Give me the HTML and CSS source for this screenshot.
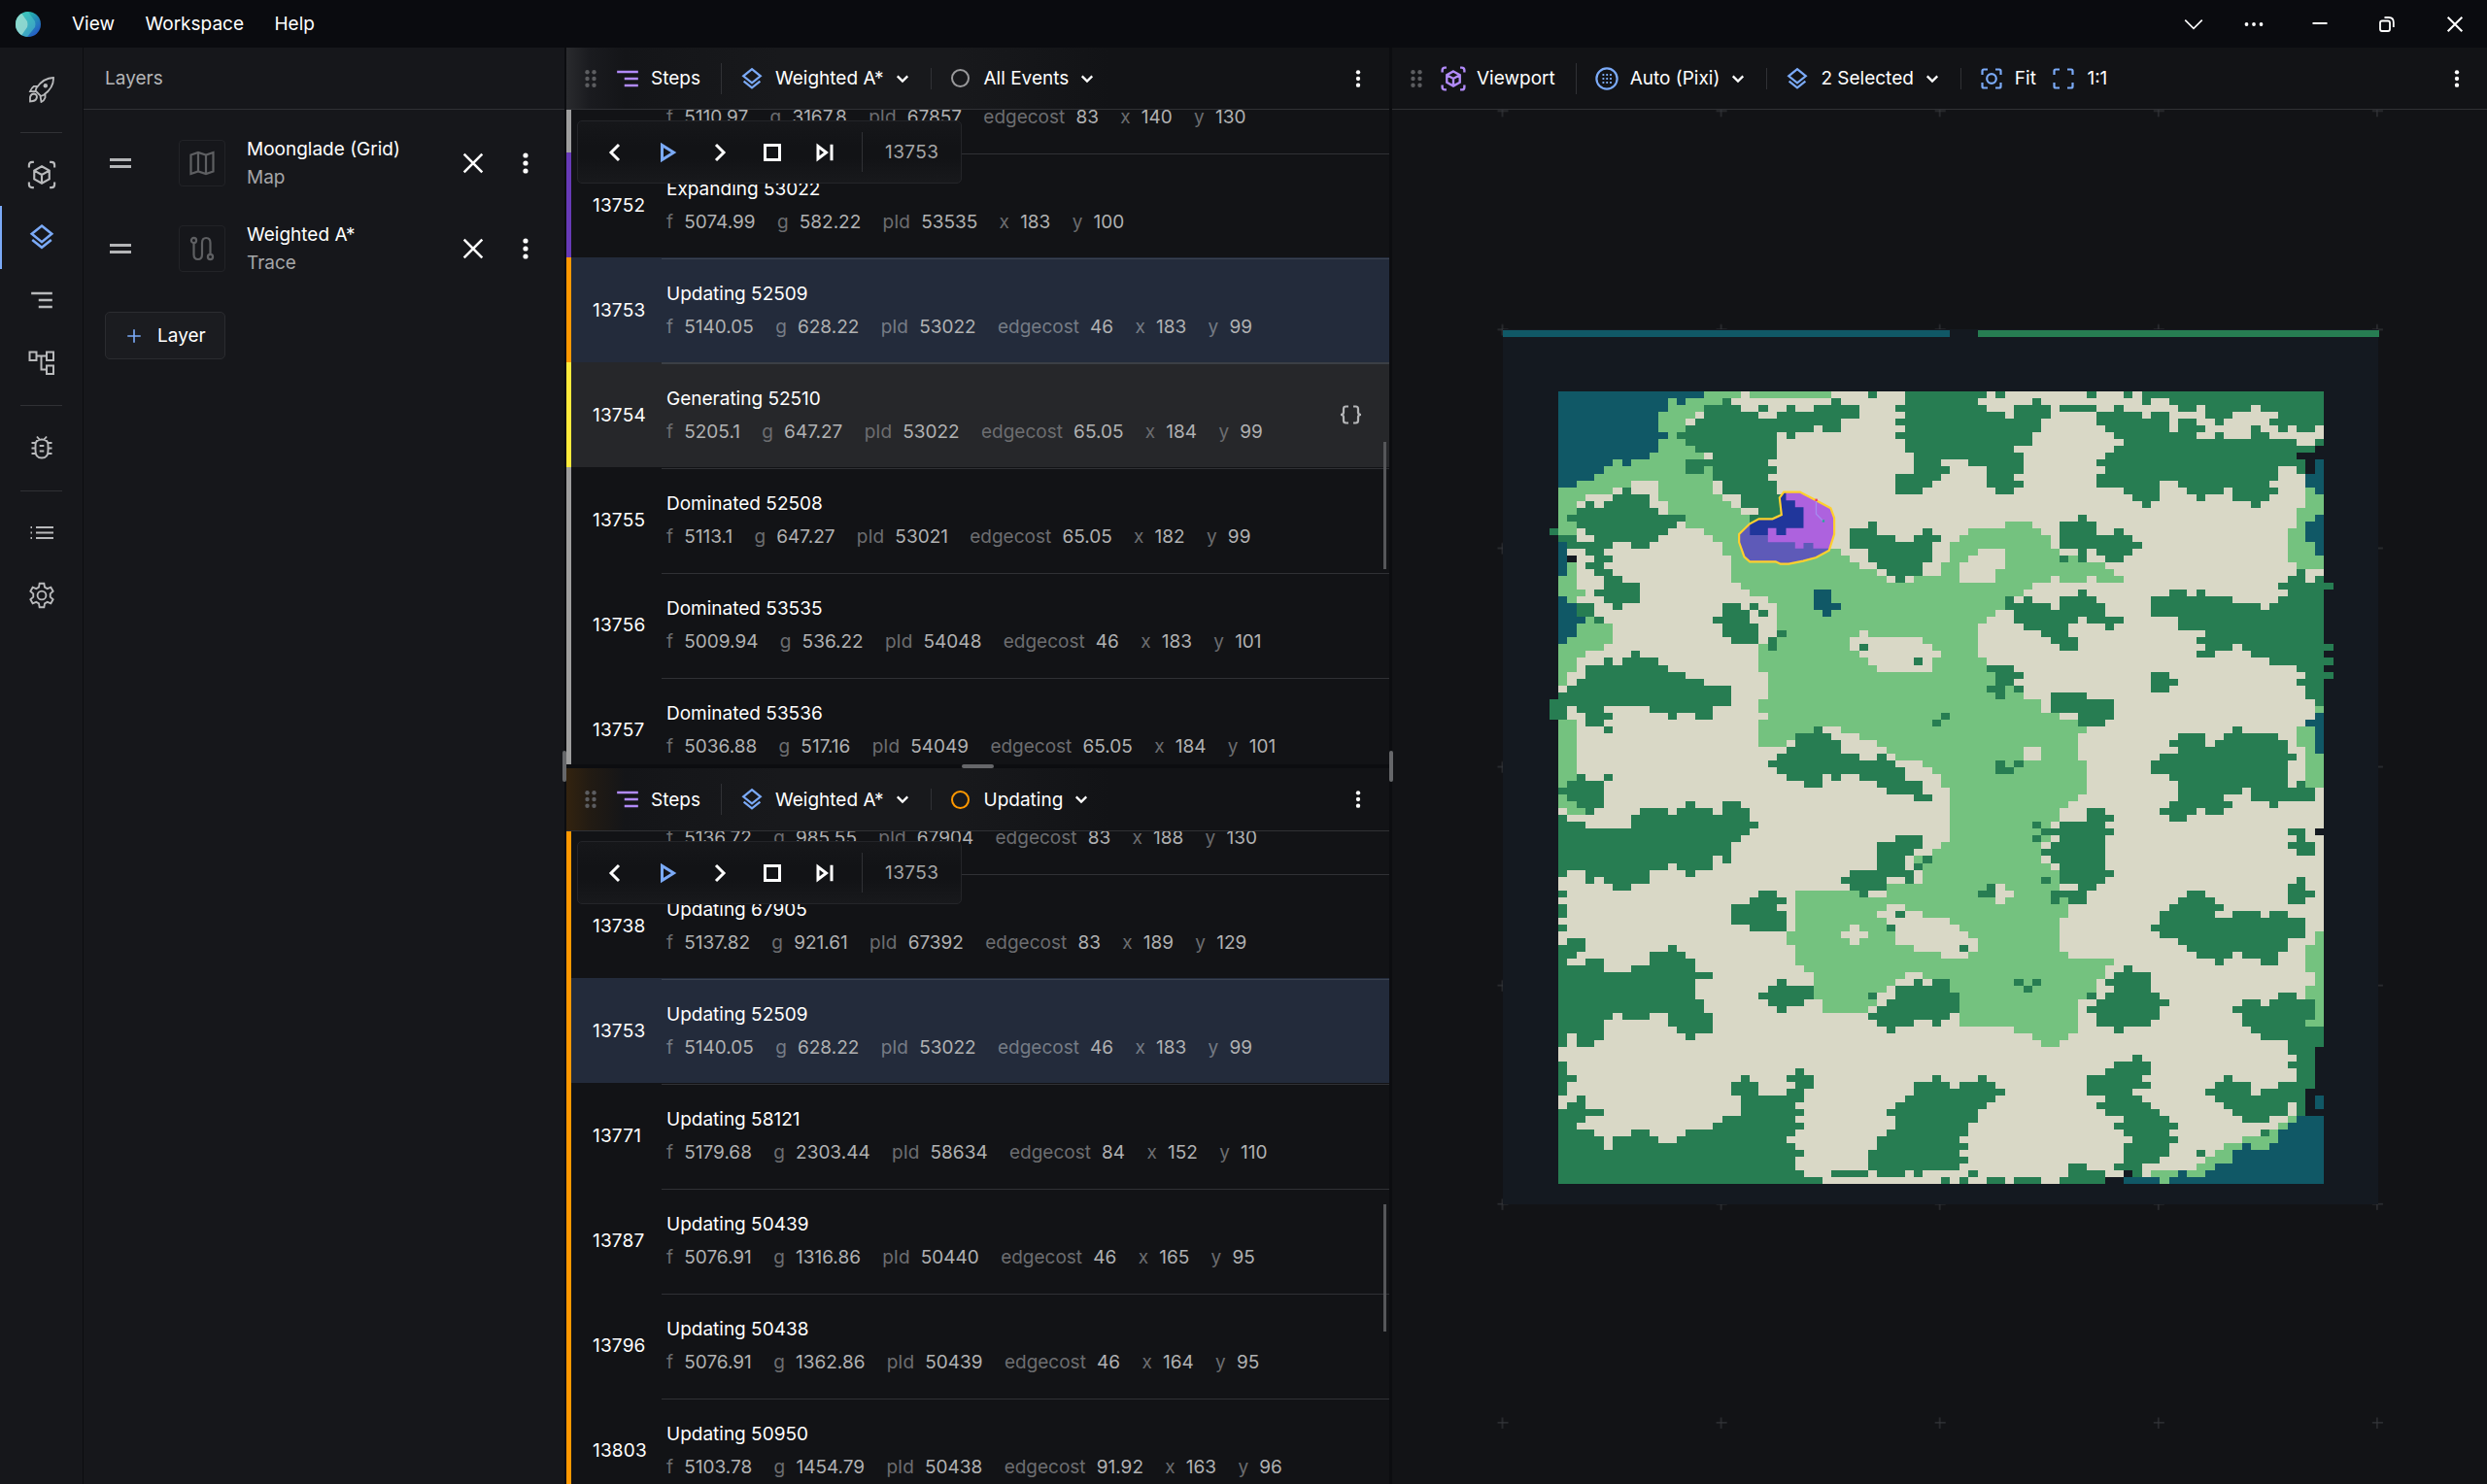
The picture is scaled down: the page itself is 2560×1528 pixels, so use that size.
FILE: index.html
```html
<!DOCTYPE html>
<html lang="en">
<head>
<meta charset="utf-8">
<title>Visualiser</title>
<link rel="stylesheet" href="styles.css">
</head>
<body>
<svg class="defs" width="0" height="0">
  <symbol id="layers" viewBox="0 0 24 24"><path d="M12 2.2 20.8 9.3 12 16.4 3.2 9.3Z M3.6 14.6 12 21.3 20.4 14.6"/></symbol>
  <symbol id="steps" viewBox="0 0 24 24"><path d="M2 5.5H22M9 12H22M9 18.5H22"/></symbol>
  <symbol id="cube" viewBox="0 0 24 24"><path d="M1.5 6V4Q1.5 1.5 4 1.5H5.5M18.500 1.5H20Q22.500 1.5 22.500 4V6M22.500 18V20Q22.500 22.500 20 22.500H18.500M5.5 22.500H4Q1.5 22.500 1.5 20V18M12 5 18.200 8.500V15.500L12 19 5.800 15.500V8.500ZM5.800 8.500 12 12 18.200 8.500M12 12V19"/></symbol>
  <symbol id="chev" viewBox="0 0 24 24"><path d="M5 8.500 12 15.500 19 8.500"/></symbol>
  <symbol id="cross" viewBox="0 0 24 24"><path d="M4 4 20 20M20 4 4 20"/></symbol>
  <symbol id="kebab" viewBox="0 0 6 24"><circle cx="3" cy="4" r="2.600"/><circle cx="3" cy="12" r="2.600"/><circle cx="3" cy="20" r="2.600"/></symbol>
  <symbol id="grip" viewBox="0 0 12 18"><circle cx="2.500" cy="2.300" r="2.200"/><circle cx="9.500" cy="2.300" r="2.200"/><circle cx="2.500" cy="9" r="2.200"/><circle cx="9.500" cy="9" r="2.200"/><circle cx="2.500" cy="15.700" r="2.200"/><circle cx="9.500" cy="15.700" r="2.200"/></symbol>
  <symbol id="prev" viewBox="0 0 24 24"><path d="M16 4 8 12 16 20"/></symbol>
  <symbol id="next" viewBox="0 0 24 24"><path d="M8 4 16 12 8 20"/></symbol>
  <symbol id="play" viewBox="0 0 24 24"><path d="M6.500 4.500V19.500L18.500 12Z"/></symbol>
  <symbol id="stop" viewBox="0 0 24 24"><path d="M4.500 4.500H19.500V19.500H4.500Z"/></symbol>
  <symbol id="skip" viewBox="0 0 24 24"><path d="M5 5.500V18.500L13.500 12ZM19 3.700V20.300"/></symbol>
  <symbol id="plus" viewBox="0 0 24 24"><path d="M12 3V21M3 12H21"/></symbol>
</svg>

<header class="titlebar">
  <svg class="logo" viewBox="0 0 26 26">
    <defs>
      <linearGradient id="lg" x1="0" y1="0" x2="1" y2="1"><stop offset=".2" stop-color="#25c3a8"/><stop offset=".9" stop-color="#2456c8"/></linearGradient>
      <clipPath id="lc"><circle cx="13" cy="13" r="13"/></clipPath>
    </defs>
    <g clip-path="url(#lc)"><rect width="26" height="26" fill="url(#lg)"/><path d="M0 0H13L20 10Q21 13 20 16L12 26H0Z" fill="#4fc4c8" opacity=".6"/><path d="M0 0H5L12 10Q13 13 12 16L5 26H0Z" fill="#a5e0d4" opacity=".75"/></g>
  </svg>
  <nav class="menu"><a>View</a><a>Workspace</a><a>Help</a></nav>
  <div class="window-tools">
    <svg class="ico wide-chev"><use href="#chev"/></svg>
    <svg class="fillico dots" width="20" height="6" viewBox="0 0 20 6"><circle cx="2.500" cy="3" r="1.900"/><circle cx="10" cy="3" r="1.900"/><circle cx="17.500" cy="3" r="1.900"/></svg>
    <svg class="fillico minimise" width="16" height="6" viewBox="0 0 16 6"><rect x="0.500" y="1" width="15" height="2"/></svg>
    <svg class="ico restore" width="16" height="16" viewBox="0 0 16 16"><path d="M1 6.500Q1 4.500 3 4.500H9Q11 4.500 11 6.500V13Q11 15 9 15H3Q1 15 1 13ZM5.500 1H10Q14.800 1.200 14.800 6V11"/></svg>
    <svg class="ico s22"><use href="#cross"/></svg>
  </div>
</header>

<div class="app">
  <aside class="rail">
    <div class="cell"><svg class="ico" width="28" height="28" viewBox="0 0 28 28"><path d="M26 2Q16 2 8.500 12.500L7.500 15.500 13 21 16 19.800Q26.500 12 26 2ZM9.500 10.800H6Q3.500 12.500 2 16.200H7.500M17.500 18.800V22.500Q16.500 25.500 13.500 27L12.500 21M2 26.500V22Q3 18.500 6 18.500 9 19 9 22 8.500 25.500 5 26Z" stroke-width="1.800"/><circle cx="17.800" cy="10.300" r="2.200" fill="currentColor" stroke="none"/></svg></div>
    <hr>
    <div class="cell"><svg class="ico s30 cube"><use href="#cube"/></svg></div>
    <div class="cell active"><svg class="ico s28"><use href="#layers"/></svg></div>
    <div class="cell"><svg class="ico s26"><use href="#steps"/></svg></div>
    <div class="cell"><svg class="ico" width="28" height="26" viewBox="0 0 28 26"><path d="M1.500 1.500H8.500V10H1.500ZM19 1.500H26V10H19ZM19 15.500H26V24H19ZM8.500 5.500H19M13.500 5.500V19.500H19" stroke-width="2"/></svg></div>
    <hr>
    <div class="cell"><svg class="ico" width="24" height="26" viewBox="0 0 24 26"><path d="M5.500 10Q5.500 4.500 12 4.500 18.500 4.500 18.500 10V16Q18.500 23.500 12 23.500 5.500 23.500 5.500 16ZM7 1.500 9.500 4.500M17 1.500 14.500 4.500M1.500 8H5.500M1.500 13.500H5.500M1.500 19H5.500M18.500 8H22.500M18.500 13.500H22.500M18.500 19H22.500M9.700 11H14.300M9.700 16.500H14.300" stroke-width="1.900"/></svg></div>
    <hr>
    <div class="cell"><svg class="ico" width="26" height="16" viewBox="0 0 26 16"><path d="M1.500 2H3M1.500 7.500H3M1.500 13H3M7 2H25M7 7.500H25M7 13H25" stroke-width="1.900"/></svg></div>
    <div class="cell"><svg class="ico" width="28" height="28" viewBox="0 0 24 24"><path d="M10 1.500H14L14.600 4.800 16.900 6.100 20 4.900 22 8.400 19.500 10.600V13.400L22 15.600 20 19.100 16.900 17.900 14.600 19.200 14 22.500H10L9.400 19.200 7.100 17.900 4 19.100 2 15.600 4.500 13.400V10.600L2 8.400 4 4.900 7.100 6.100 9.400 4.800Z" stroke-width="1.600"/><circle cx="12" cy="12" r="3.800" stroke-width="1.600"/></svg></div>
  </aside>

  <section class="panel layers">
    <h2 class="bar">Layers</h2>
    <div class="layer">
      <span class="drag"></span>
      <span class="thumb"><svg class="ico" width="26" height="26" viewBox="0 0 26 26"><path d="M1.500 4.500 9 2 17 4.500 24.500 2V21.500L17 24 9 21.500 1.500 24ZM9 2V21.500M17 4.500V24"/></svg></span>
      <div class="label"><b>Moonglade (Grid)</b><small>Map</small></div>
      <svg class="ico s28"><use href="#cross"/></svg><svg class="kebab"><use href="#kebab"/></svg>
    </div>
    <div class="layer">
      <span class="drag"></span>
      <span class="thumb"><svg class="ico" width="26" height="26" viewBox="0 0 26 26"><circle cx="4.500" cy="4.500" r="2.600"/><circle cx="21.500" cy="21.500" r="2.600"/><path d="M4.500 7V19Q4.500 24 8.800 24 13 24 13 19V7Q13 2 17.200 2 21.500 2 21.500 7V19"/></svg></span>
      <div class="label"><b>Weighted A*</b><small>Trace</small></div>
      <svg class="ico s28"><use href="#cross"/></svg><svg class="kebab"><use href="#kebab"/></svg>
    </div>
    <button class="add"><svg class="ico blue" width="18" height="18"><use href="#plus"/></svg>Layer</button>
  </section>

  <div class="column">
    <section class="steps">
      <div class="bar glow gray">
        <svg class="grip"><use href="#grip"/></svg>
        <svg class="ico s26 purple"><use href="#steps"/></svg><span class="name">Steps</span><i class="sep"></i>
        <svg class="ico s24 blue"><use href="#layers"/></svg><span class="pick">Weighted A*</span><svg class="ico s18 chev"><use href="#chev"/></svg><i class="sep short"></i>
        <span class="ring"></span><span class="pick">All Events</span><svg class="ico s18 chev"><use href="#chev"/></svg>
        <svg class="kebab"><use href="#kebab"/></svg>
      </div>
      <div class="list">
        <div class="row gray"><em></em><div><b>&nbsp;</b><p><i>f</i>5110.97<i>g</i>3167.8<i>pId</i>67857<i>edgecost</i>83<i>x</i>140<i>y</i>130</p></div></div>
        <div class="row violet"><em>13752</em><div><b>Expanding 53022</b><p><i>f</i>5074.99<i>g</i>582.22<i>pId</i>53535<i>x</i>183<i>y</i>100</p></div></div>
        <div class="row orange selected"><em>13753</em><div><b>Updating 52509</b><p><i>f</i>5140.05<i>g</i>628.22<i>pId</i>53022<i>edgecost</i>46<i>x</i>183<i>y</i>99</p></div></div>
        <div class="row yellow hover"><em>13754</em><div><b>Generating 52510</b><p><i>f</i>5205.1<i>g</i>647.27<i>pId</i>53022<i>edgecost</i>65.05<i>x</i>184<i>y</i>99</p></div><svg class="ico json" width="26" height="20" viewBox="0 0 26 20"><path d="M11 1.500H8.500Q6 1.500 6 4V7.500Q6 10 3 10 6 10 6 12.500V16Q6 18.500 8.500 18.500H11M16 1.500H18.500Q21 1.500 21 4V7.500Q21 10 24 10 21 10 21 12.500V16Q21 18.500 18.500 18.500H16"/></svg></div>
        <div class="row gray"><em>13755</em><div><b>Dominated 52508</b><p><i>f</i>5113.1<i>g</i>647.27<i>pId</i>53021<i>edgecost</i>65.05<i>x</i>182<i>y</i>99</p></div></div>
        <div class="row gray"><em>13756</em><div><b>Dominated 53535</b><p><i>f</i>5009.94<i>g</i>536.22<i>pId</i>54048<i>edgecost</i>46<i>x</i>183<i>y</i>101</p></div></div>
        <div class="row gray"><em>13757</em><div><b>Dominated 53536</b><p><i>f</i>5036.88<i>g</i>517.16<i>pId</i>54049<i>edgecost</i>65.05<i>x</i>184<i>y</i>101</p></div></div>
        <div class="player"><svg class="ico"><use href="#prev"/></svg><svg class="ico blue"><use href="#play"/></svg><svg class="ico"><use href="#next"/></svg><svg class="ico"><use href="#stop"/></svg><svg class="ico"><use href="#skip"/></svg><span>13753</span></div>
        <span class="scroll"></span>
      </div>
    </section>
    <div class="split"></div>
    <section class="steps grow">
      <div class="bar glow amber">
        <svg class="grip"><use href="#grip"/></svg>
        <svg class="ico s26 purple"><use href="#steps"/></svg><span class="name">Steps</span><i class="sep"></i>
        <svg class="ico s24 blue"><use href="#layers"/></svg><span class="pick">Weighted A*</span><svg class="ico s18 chev"><use href="#chev"/></svg><i class="sep short"></i>
        <span class="ring on"></span><span class="pick">Updating</span><svg class="ico s18 chev"><use href="#chev"/></svg>
        <svg class="kebab"><use href="#kebab"/></svg>
      </div>
      <div class="list second">
        <div class="row orange"><em></em><div><b>&nbsp;</b><p><i>f</i>5136.72<i>g</i>985.55<i>pId</i>67904<i>edgecost</i>83<i>x</i>188<i>y</i>130</p></div></div>
        <div class="row orange"><em>13738</em><div><b>Updating 67905</b><p><i>f</i>5137.82<i>g</i>921.61<i>pId</i>67392<i>edgecost</i>83<i>x</i>189<i>y</i>129</p></div></div>
        <div class="row orange selected"><em>13753</em><div><b>Updating 52509</b><p><i>f</i>5140.05<i>g</i>628.22<i>pId</i>53022<i>edgecost</i>46<i>x</i>183<i>y</i>99</p></div></div>
        <div class="row orange"><em>13771</em><div><b>Updating 58121</b><p><i>f</i>5179.68<i>g</i>2303.44<i>pId</i>58634<i>edgecost</i>84<i>x</i>152<i>y</i>110</p></div></div>
        <div class="row orange"><em>13787</em><div><b>Updating 50439</b><p><i>f</i>5076.91<i>g</i>1316.86<i>pId</i>50440<i>edgecost</i>46<i>x</i>165<i>y</i>95</p></div></div>
        <div class="row orange"><em>13796</em><div><b>Updating 50438</b><p><i>f</i>5076.91<i>g</i>1362.86<i>pId</i>50439<i>edgecost</i>46<i>x</i>164<i>y</i>95</p></div></div>
        <div class="row orange"><em>13803</em><div><b>Updating 50950</b><p><i>f</i>5103.78<i>g</i>1454.79<i>pId</i>50438<i>edgecost</i>91.92<i>x</i>163<i>y</i>96</p></div></div>
        <div class="player"><svg class="ico"><use href="#prev"/></svg><svg class="ico blue"><use href="#play"/></svg><svg class="ico"><use href="#next"/></svg><svg class="ico"><use href="#stop"/></svg><svg class="ico"><use href="#skip"/></svg><span>13753</span></div>
        <span class="scroll"></span>
      </div>
    </section>
    <span class="grab left"></span><span class="grab right"></span>
  </div>

  <section class="viewport">
    <div class="bar">
      <svg class="grip"><use href="#grip"/></svg>
      <svg class="ico s26 purple"><use href="#cube"/></svg><span class="name">Viewport</span><i class="sep"></i>
      <svg class="ico s24 blue" viewBox="0 0 24 24"><circle cx="12" cy="12" r="10.600"/><path d="M7.500 8H17M7.500 12H17M7.500 16H17" stroke-dasharray="1.800 2"/></svg><span class="pick">Auto (Pixi)</span><svg class="ico s18 chev"><use href="#chev"/></svg><i class="sep short"></i>
      <svg class="ico s24 blue"><use href="#layers"/></svg><span class="pick">2 Selected</span><svg class="ico s18 chev"><use href="#chev"/></svg><i class="sep short"></i>
      <svg class="ico s24 blue" viewBox="0 0 24 24"><path d="M2.500 8V4Q2.500 2.500 4 2.500H8M16 2.500H20Q21.500 2.500 21.500 4V8M21.500 16V20Q21.500 21.500 20 21.500H16M8 21.500H4Q2.500 21.500 2.500 20V16"/><circle cx="12" cy="12" r="4.800"/></svg><span class="pick tight">Fit</span>
      <svg class="ico s24 blue" viewBox="0 0 24 24"><path d="M2.500 8V4Q2.500 2.500 4 2.500H8M16 2.500H20Q21.500 2.500 21.500 4V8M21.500 16V20Q21.500 21.500 20 21.500H16M8 21.500H4Q2.500 21.500 2.500 20V16"/></svg><span class="pick">1:1</span>
      <svg class="kebab"><use href="#kebab"/></svg>
    </div>
    <svg class="stage" width="1127" height="1415" viewBox="0 0 1127 1415">
      <defs>
        <pattern id="ticks" x="1" y="-111.2" width="225.100" height="225.100" patternUnits="userSpaceOnUse"><path d="M107.500 112.500H118.500M112.500 107V118.500" stroke="#34363a" stroke-width="1.200"/></pattern>
        <clipPath id="lake"><path id="edge" d="M890 530H940L990 556 1035 580 1046 610V660L1030 710 990 732 950 743 905 752H880L865 745H785L768 730 752 685V660L785 628 813 613H855L883 600 877 548Z"/></clipPath>
      </defs>
      <rect width="1127" height="1415" fill="url(#ticks)"/>
      <g class="map" transform="translate(113.500 226.300)">
        <rect width="901" height="901" fill="#141920"/>
        <g transform="translate(1.100 .5) scale(9.385 7.035)">
          <path class="sea" d="M-.1 0H49V1H-.1Z"/><path class="tree" d="M52 0H96V1H52Z"/>
          <path class="sand" d="M6 9H90V125H6Z"/>
          <path class="grass" d="M6 9H26V10H25V11H24V18H23V24H24V25H25V26H26V27H27V28H35V32H37V33H38V34H39V35H41V36H42V37H45V36H48V34H49V31H50V30H51V29H55V28H58V29H59V30H60V32H61V33H64V34H66V35H67V36H68V37H65V36H64V37H61V36H60V37H58V38H57V39H55V41H54V42H53V43H52V48H53V49H55V52H57V54H59V56H61V57H63V58H64V59H63V63H64V68H63V69H62V70H61V82H62V86H61V91H62V92H67V93H66V95H65V98H63V103H62V104H61V105H59V104H58V103H56V102H50V100H35V98H34V94H33V93H32V90H31V88H32V82H42V81H46V77H47V76H48V75H49V67H48V65H47V64H46V63H43V62H42V61H41V60H39V59H37V58H34V59H32V60H31V61H28V57H29V56H28V54H29V50H28V46H29V45H30V40H29V39H27V38H26V37H25V33H24V31H23V30H22V29H20V28H19V27H18V25H17V22H14V23H12V24H9V25H8V31H6Z
            M27 9H36V10H27Z M7 34H8V38H9V39H8V40H7V39H6V36H7Z M9 42H11V43H12V46H11V47H9V48H8V50H7V52H6V46H7V45H8V43H9Z M6 57H8V70H9V71H7V70H6Z M45 77h1v1h-1Z
            M88 23H89V24H90V27H89V28H88V31H89V33H90V35H87V34H86V29H87V26H88Z M89 55h1v1h-1Z M87 58H89V62H90V67H88V61H87Z M89 88H90V102H88V96H89V94H88V90H89Z
            M86 115H87V116H86V117H85V119H84V120H82V119H81V120H80V122H78V123H77V124H75V123H76V122H77V121H78V120H79V119H81V118H84V117H85V116H86Z M71 123H74V124H73V125H72V124H71Z"/>
          <path class="sand" d="M21 12h1v1h-1Z M20 13h1v1h-1Z M22 18h1v1h-1Z M39 44H40V45H46V46H47V47H48V48H47V50H41V49H40V48H39V47H38V45H39Z M52 32H55V35H54V37H50V34H51V33H52Z M57 61h2v2h-2Z M54 81H55V82H56V83H55V84H54Z
            M38 87H39V88H40V89H39V90H38V89H37V88H38Z M42 84H44V85H46V86H49V87H50V88H51V89H52V91H51V92H48V91H45V90H43V87H42V86H41V85H42Z M44 94H46V95H47V96H43V98H42V99H41V100H40V99H41V97H42V96H43V95H44Z M40 82H42V83H40Z
            M60 72h1v1h-1Z M60 74h1v1h-1Z M59 75h1v1h-1Z M59 77h1v1h-1Z M60 78h1v1h-1Z"/>
          <path class="tree" d="M24 10H25V11H26V12H28V13H30V12H31V11H32V12H34V11H36V10H37V11H39V13H37V15H35V14H34V15H32V16H31V15H30V19H29V20H30V21H29V22H30V24H31V29H27V27H28V26H26V24H24V22H23V20H22V21H20V19H23V18H21V17H20V16H19V15H20V14H21V13H22V11H24Z
            M28 11h1v1h-1Z M40 9h1v1h-1Z M5 29h1v1h-1Z M13 23H14V24H16V26H17V27H20V28H19V29H18V30H17V31H16V32H14V31H12V32H11V33H12V34H11V35H12V36H13V37H15V40H13V41H12V40H11V39H10V38H11V36H10V35H9V34H10V33H9V32H7V31H6V30H8V31H10V30H9V29H8V28H7V27H8V26H9V25H10V26H11V25H12V24H13Z
            M8 40H10V42H8Z M10 42h1v1h-1Z M24 40H26V41H27V43H28V46H25V45H24V43H23V42H24Z M27 40h1v1h-1Z M28 41h1v1h-1Z M30 44h1v1h-1Z M29 45h1v2h-1Z
            M14 47H15V48H17V49H18V50H20V51H22V52H25V55H23V57H21V56H19V57H18V56H16V55H11V56H12V57H11V58H9V56H8V55H7V57H5V54H6V53H7V52H8V51H9V49H11V48H12V49H13V48H14Z M11 58h1v1h-1Z
            M44 9H53V10H52V11H53V12H55V13H56V11H58V10H59V11H60V13H59V15H58V17H56V18H57V21H56V22H57V23H56V24H54V23H53V20H51V19H48V20H49V21H48V22H47V23H46V24H43V21H45V18H44V16H43V15H44V14H43V13H44V12H43V11H44Z
            M54 9h1v1h-1Z M64 9h1v1h-1Z M68 9h1v1h-1Z M61 11H65V12H61Z M70 9H90V14H89V15H87V14H86V15H85V14H84V13H85V12H83V11H82V12H80V13H79V14H78V13H77V11H76V12H74V11H73V10H71V11H70Z
            M67 11H68V12H70V13H71V12H73V15H74V13H76V14H77V15H76V16H78V15H79V16H82V14H83V15H84V16H87V17H89V16H90V17H89V18H87V19H88V21H87V20H85V22H84V23H85V24H84V25H83V26H82V25H80V23H79V24H77V25H76V24H75V23H74V22H72V25H71V26H70V25H69V24H68V23H65V21H66V20H65V19H66V18H67V17H68V16H67V15H66V14H65V12H67Z
            M40 28H41V30H43V31H45V30H46V29H47V30H48V31H47V34H46V36H44V37H43V36H42V35H41V34H40V32H38V29H40Z M63 27H64V28H65V30H67V29H68V30H69V31H70V32H69V33H68V34H66V33H65V32H64V34H63V32H61V28H63Z M61 33h1v1h-1Z
            M63 38H64V39H65V40H66V42H68V43H67V44H66V43H64V42H63V43H62V45H63V47H61V46H60V45H59V44H57V43H56V41H55V39H56V40H57V39H58V40H60V41H61V39H63Z M39 46h1v1h-1Z M45 48h1v1h-1Z
            M53 49H56V50H57V51H56V52H55V54H54V53H53V52H54V50H53Z M56 52h1v1h-1Z M48 56h1v1h-1Z M47 57h1v1h-1Z
            M73 38H75V39H76V38H77V39H80V40H83V41H84V40H85V39H86V38H85V37H86V36H87V35H88V37H89V36H90V37H91V38H90V46H91V47H90V48H91V49H90V50H91V51H90V55H89V54H88V52H87V51H88V50H87V49H84V48H82V47H81V46H80V47H78V48H76V47H77V46H76V45H77V44H74V42H71V39H73Z
            M71 50H73V51H74V52H73V53H71Z M60 53H64V54H67V57H66V58H63V56H60Z
            M80 58H81V59H85V60H86V62H87V63H86V67H87V66H88V67H89V69H85V70H84V69H82V67H81V68H79V69H80V70H79V71H77V70H76V71H75V72H73V71H72V70H73V69H74V66H73V65H71V63H72V62H74V61H73V60H74V59H77V61H78V60H79V59H80Z
            M54 63H55V64H56V65H54Z M56 63h1v1h-1Z M34 58H35V59H36V60H37V62H39V63H41V62H42V63H43V64H44V66H46V68H47V69H45V68H42V67H41V66H39V65H37V66H36V65H35V67H33V66H31V65H30V64H29V63H30V62H31V61H32V59H34Z
            M8 65H9V66H11V70H10V71H9V70H8V69H7V68H6V67H7V66H8Z M11 65h1v1h-1Z M6 71H7V72H9V73H14V71H15V70H18V71H19V70H20V69H21V70H23V71H24V69H26V70H27V72H28V73H27V74H26V75H25V78H24V77H23V79H21V80H20V79H19V78H18V79H16V81H14V82H12V81H11V80H10V81H9V79H7V80H6Z
            M6 82h1v1h-1Z M6 84h1v2h-1Z M6 87h1v1h-1Z M7 89H9V91H8V92H7V93H9V92H11V94H14V93H16V91H18V90H19V91H20V92H21V94H23V95H21V98H22V100H23V103H21V104H20V103H19V102H18V100H16V101H13V100H12V101H11V104H10V105H8V103H7V105H6V90H7Z M6 107H7V109H8V110H7V112H6Z
            M28 82H30V83H31V84H30V85H31V88H27V87H25V84H27V83H28Z M43 74H46V76H45V77H44V79H45V81H44V80H42V82H40V83H39V82H38V81H37V80H38V79H41V75H43Z M46 77h1v1h-1Z M45 78h1v1h-1Z M53 81H54V83H52V82H53Z
            M30 95H31V96H34V98H33V99H31V100H30V99H29V98H28V97H29V96H30Z M47 95H49V97H50V100H49V101H48V102H47V101H45V102H43V103H42V102H41V101H40V100H41V99H42V98H43V96H45V95H46V96H47Z M40 97h1v1h-1Z M43 85h1v1h-1Z M42 87h1v1h-1Z M50 90h1v1h-1Z
            M32 108H33V109H34V111H33V113H32V114H33V115H32V116H33V117H32V118H31V119H32V120H33V121H32V123H33V124H35V125H6V114H7V113H8V112H9V114H11V115H9V116H8V117H10V118H11V120H12V118H14V117H16V118H17V119H19V118H20V117H23V116H24V115H26V112H25V110H26V109H27V110H28V112H31V111H32V110H31V109H32Z
            M36 123H40V124H36Z M47 109H48V110H49V111H50V110H52V109H53V110H54V111H55V112H54V113H53V114H52V116H51V118H50V119H51V120H50V121H51V122H50V123H46V124H45V123H44V124H41V123H40V120H41V118H42V117H43V115H42V114H43V113H44V112H45V110H47Z
            M48 124h1v1h-1Z M50 124h1v1h-1Z M51 123h1v1h-1Z M53 124h2v1h-2Z M56 124h3v1h-3Z M61 124H62V122H64V123H66V125H61Z
            M64 70H66V71H67V72H66V73H67V74H66V79H67V80H66V81H65V82H64V84H62V83H61V84H60V82H63V81H61V78H60V77H59V76H60V75H61V74H59V73H61V72H64Z M58 72h1v1h-1Z M58 74h1v1h-1Z M59 80h1v1h-1Z
            M86 73H88V75H89V77H87V76H86V75H87V74H86Z M87 80H88V82H89V83H88V84H86V81H87Z M75 82H77V83H78V84H79V85H78V86H80V85H83V86H84V85H86V86H88V89H86V91H85V93H83V92H81V91H80V92H79V93H78V92H76V91H75V90H74V89H72V88H71V87H72V85H73V84H74V83H75Z
            M68 93H69V94H71V97H72V98H73V99H72V101H71V102H68V103H67V102H65V100H64V99H65V98H66V97H67V96H66V95H67V94H68Z M64 97h1v1h-1Z M56 95h1v1h-1Z M58 95h1v1h-1Z M57 96h1v1h-1Z
            M85 97H87V98H89V101H88V102H90V105H89V111H88V115H87V113H86V115H84V116H81V115H80V114H79V113H78V112H77V111H78V110H79V109H80V110H82V112H83V111H85V110H87V108H86V107H87V106H86V104H83V103H82V102H81V100H80V99H81V98H83V99H84V98H85Z
            M69 106H70V107H71V109H70V110H71V111H69V112H70V113H71V114H72V115H73V116H74V117H73V118H74V119H73V121H72V122H70V124H69V123H67V122H68V119H69V118H68V117H67V116H68V115H66V114H65V113H66V112H64V109H66V108H67V107H69Z M83 117h1v1h-1Z M76 120h1v1h-1Z"/>
          <path class="sea" d="M6 9H22V10H20V11H19V10H18V12H17V15H18V16H17V18H16V19H14V20H13V19H12V20H11V21H10V22H8V23H6Z M6 31H7V36H6Z M6 39H7V40H8V42H9V43H8V45H7V46H6Z M34 38H36V40H37V41H36V42H35V41H34Z
            M89 19H90V24H89V23H88V21H89Z M89 27H90V33H89V31H88V28H89Z M89 56H90V62H89V58H88V57H89Z M89 112h1v2h-1Z M87 115H90V125H73V124H74V123H75V124H77V123H78V122H80V120H81V119H82V120H84V119H85V117H86V116H87Z M68 124H72V125H68Z"/>
          <path class="void" d="M87 18H89V17H90V19H89V21H88V19H87Z M7 33h1v1h-1Z M89 73h1v1h-1Z M89 105H90V112H89V114H90V115H88V111H89Z M68 123h1v1h-1Z M66 124h2v1h-2Z"/>
        </g>
      </g>
      <g transform="translate(106.500 217) scale(.3333)">
        <g clip-path="url(#lake)">
          <path fill="#ad62de" d="M740 520H1060V760H740Z"/>
          <path fill="#5e5ab8" d="M740 600H785V663H841V685H925V704H951V687H981V704H1060V760H740Z"/>
          <path fill="#20369b" d="M860 520H897V556H925V577H951V641H897V663H867V641H841V663H785V600H860Z"/>
        </g>
        <use href="#edge" fill="none" stroke="#ffd02e" stroke-width="6.500"/>
        <path d="M990 556V598L1012 620" fill="none" stroke="#a68bf0" stroke-width="4"/>
        <path fill="#f5365c" d="M987 551h7v7h-7Z"/><path fill="#26a69a" d="M1009 616h7v7h-7Z"/>
      </g>
    </svg>
  </section>
</div>
</body>
</html>
```

FILE: styles.css
```css
* { box-sizing: border-box; }
body {
  margin: 0;
  width: 2560px;
  height: 1528px;
  overflow: hidden;
  display: flex;
  flex-direction: column;
  background: #0c0d10;
  color: #fff;
  font: 400 19px/29px Inter, "Liberation Sans", sans-serif;
}
.defs { position: absolute; }
b, em, i { font-weight: 400; font-style: normal; }
.ico { fill: none; stroke: currentColor; stroke-width: 2.2; flex: none; }
.s18 { width: 18px; height: 18px; }
.s22 { width: 22px; height: 22px; }
.s24 { width: 24px; height: 24px; }
.s26 { width: 26px; height: 26px; }
.s28 { width: 28px; height: 28px; }
.s30 { width: 30px; height: 30px; }
.cube { stroke-width: 1.7; }
.blue { color: #7baaf7; }
.purple { color: #b18af8; }
.fillico { fill: #fff; }
.kebab { width: 6px; height: 20px; fill: #fff; flex: none; }
.grip { width: 12px; height: 18px; fill: #5c5d60; flex: none; }

.titlebar { height: 49px; flex: none; display: flex; align-items: center; padding: 0 22px 0 16px; background: #0a0b0f; }
.logo { width: 26px; height: 26px; }
.menu { display: flex; gap: 31.500px; margin-left: 32px; }
.window-tools { display: flex; align-items: center; margin-left: auto; }
.wide-chev { width: 30px; height: 30px; stroke-width: 1.3; margin-right: 37px; }
.dots { margin-right: 50px; }
.minimise { margin-right: 53px; }
.restore { margin-right: 51px; stroke-width: 1.8; }

.app { flex: 1; display: flex; min-height: 0; }
.rail { width: 86px; display: flex; flex-direction: column; align-items: center; padding-top: 11px; background: #16171b; border-right: 1px solid #0c0d10; color: #b9babc; }
.cell { width: 100%; height: 64.600px; display: flex; align-items: center; justify-content: center; flex: none; }
.active { color: #7baaf7; box-shadow: inset 2px 0 #7baaf7; }
.rail hr { width: 43px; height: 1px; margin: 11px 0; border: 0; background: #303135; flex: none; }

.bar { height: 64px; flex: none; display: flex; align-items: center; border-bottom: 1px solid #303135; }
.panel { width: 495px; margin-right: 2px; background: #16171b; }
.layers h2 { margin: 0 0 11px; padding-left: 22px; font: inherit; color: #b4b5b7; }
.layer { display: flex; align-items: center; height: 88px; padding-left: 27px; }
.drag { width: 22px; height: 10px; border: solid #b4b5b7; border-width: 3px 0; }
.thumb { width: 48px; height: 48px; margin: 0 22px 0 49px; display: grid; place-items: center; border: 1px solid #222327; border-radius: 4px; color: #5e5f62; }
.label { width: 219px; }
.label b, .label small { display: block; font-size: 19px; }
.label small { color: #a5a6a8; }
.layer .kebab { height: 26px; width: 6px; margin-left: 37px; }
.add { display: flex; align-items: center; gap: 15px; width: 124px; height: 49px; margin: 21px 0 0 22px; padding: 0 0 0 20px; border: 1px solid #2b2c30; border-radius: 5px; background: #1b1c20; color: #fff; font: inherit; }

.column { position: relative; width: 850px; display: flex; flex-direction: column; padding-right: 3px; }
.steps { height: 738px; display: flex; flex-direction: column; background: #121316; }
.steps.grow { height: auto; flex: 1; min-height: 0; }
.grow .bar { height: 65px; }
.steps .bar, .viewport .bar { padding-left: 19px; }
.steps .bar .kebab, .viewport .bar .kebab { margin: 0 29px 0 auto; }
.gray.glow { background: linear-gradient(90deg, #2a2b2e, #1a1b1f 24px, #141518 60px, #18191c 220px, #18191c 400px, #121316 560px); }
.amber.glow { background: linear-gradient(90deg, #33230f, #221b13 24px, #141518 60px, #18191c 220px, #18191c 400px, #121316 560px); }
.grip + .ico { margin-left: 19px; }
.name { margin-left: 11px; }
.sep { width: 1px; height: 32px; margin: 0 19px 0 21px; background: #303135; }
.short { height: 22px; }
.pick { margin-left: 12px; }
.tight { margin-right: 16.500px; }
.chev { margin-left: 10px; stroke-width: 3; }
.chev + .sep { margin-left: 20px; }
.ring { width: 19px; height: 19px; margin-left: 1px; border: 2px solid #99999b; border-radius: 50%; }
.ring + .pick { margin-left: 15px; }
.ring.on { border-color: #ff9800; }

.list { position: relative; flex: 1; min-height: 0; overflow: hidden; display: flex; flex-direction: column; }
.row { height: 108px; flex: none; display: flex; align-items: center; padding-left: 22px; border-left: 5px solid; }
.row:first-child { margin-top: -64px; }
.second .row:first-child { margin-top: -65px; }
.row em { width: 71px; letter-spacing: .2px; }
.row div { flex: 1; height: 108px; padding: 23px 0 0 5px; box-shadow: inset 0 1px #121316, inset 0 2px #303135; }
.row p { margin: 5px 0 0; color: #b0b1b2; }
.row i { color: #6c6d70; margin: 0 11.200px 0 22.300px; }
.row i:first-child { margin-left: 0; }
.row.gray { border-color: #9e9e9e; }
.row.violet { border-color: #673ab7; }
.row.orange { border-color: #ff9800; }
.row.yellow { border-color: #ffeb3b; }
.row.selected { background: #232b3b; }
.row.selected div { box-shadow: inset 0 1px #232b3b, inset 0 2px #3b4352; }
.row.selected i { color: #757b85; }
.row.hover { position: relative; background: #26272a; }
.row.hover div { box-shadow: inset 0 2px #3b3f45; }
.json { position: absolute; right: 27px; top: 44px; color: #b4b5b7; }
.player { position: absolute; left: 11px; top: 11px; width: 396px; height: 65px; display: flex; align-items: center; gap: 30px; padding-left: 26px; border: 1px solid #242529; border-radius: 5px; background: linear-gradient(#16171a, #121316 40%, #121316 60%, #18191c); }
.second .player { top: 10px; }
.player svg { width: 24px; height: 24px; stroke-width: 3; }
.player span { padding-left: 23px; border-left: 1px solid #303135; line-height: 41px; margin-left: -4px; color: #a5a6a8; letter-spacing: .4px; }
.scroll { position: absolute; right: 3px; top: 342px; width: 3px; height: 131px; background: #56575a; }
.second .scroll { top: 384px; }
.split { width: 33px; height: 4px; margin-left: 407px; border-radius: 2px; background: #66676a; }
.grab { position: absolute; top: 724px; width: 4px; height: 32px; border-radius: 2px; background: #66676a; }
.left { left: -4px; }
.right { right: -1px; }

.viewport { flex: 1; display: flex; flex-direction: column; background: #121316; }
.viewport .bar .kebab { margin-right: 28px; }
.stage { display: block; }
.map { shape-rendering: crispEdges; }
.sand { fill: #d9d8c6; }
.grass { fill: #74c27f; }
.tree { fill: #277d52; }
.sea { fill: #105866; }
.void { fill: #141920; }
```
